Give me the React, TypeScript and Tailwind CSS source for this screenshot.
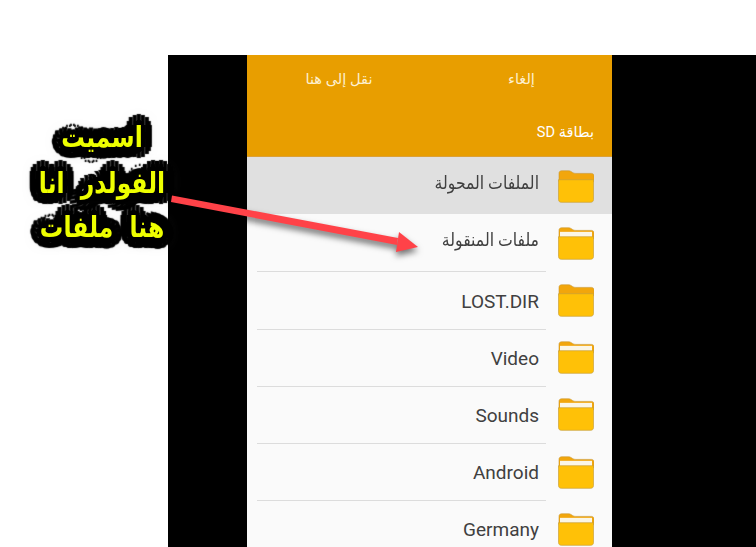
const ROW_FONT = "font-['Roboto','DejaVu_Sans',sans-serif]";

const rows = [
  { name: "الملفات المحولة", open: false, selected: true, arabic: true, noLine: true },
  { name: "ملفات المنقولة", open: true, arabic: true, noLine: true },
  { name: "LOST.DIR", open: false },
  { name: "Video", open: true },
  { name: "Sounds", open: true },
  { name: "Android", open: true },
  { name: "Germany", open: true },
];

const FolderIcon = ({ open }: { open: boolean }) => (
  <svg width="36" height="33" viewBox="0 0 36 34" preserveAspectRatio="none" className="shrink-0">
    <path
      d="M1 3.5C1 1.8 2 .8 3.5 .8H10c2 0 3 .6 4.5 1.7 1 .8 2 1 3.5 1h15.5c1.5 0 2.5 1 2.5 2.5V12H1Z"
      fill="#f2a60c"
      stroke="#c9952e"
      strokeWidth=".6"
    />
    {open && <rect x="2" y="5" width="32" height="5.5" fill="#fbf6e6" />}
    <path
      d="M.5 10H35.5V30.5C35.5 32.2 34.4 33.3 32.7 33.3H3.3C1.6 33.3 .5 32.2 .5 30.5Z"
      fill="#ffc107"
      stroke="#c9a13a"
      strokeWidth=".7"
    />
  </svg>
);

interface RowProps {
  name: string;
  open: boolean;
  selected?: boolean;
  arabic?: boolean;
  noLine?: boolean;
}

const Row = ({ name, open, selected, arabic, noLine }: RowProps) => (
  <div className={`h-[57.2px] flex flex-col ${selected ? "bg-[#e0e0e0]" : "bg-[#fafafa]"}`}>
    <div className={`ml-[10px] w-[289px] h-px shrink-0 ${noLine ? "bg-transparent" : "bg-[#dcdcdc]"}`} />
    <div className="flex-1 flex items-center justify-end pr-[18px] gap-[19px]">
      <span className={`text-[#404040] ${arabic ? "text-[15.7px] pb-[5px] scale-y-[1.15]" : "text-[19px] pt-[3px]"}`}>{name}</span>
      <FolderIcon open={open} />
    </div>
  </div>
);

export default function App() {
  return (
    <div className={`relative w-[756px] h-[547px] overflow-hidden bg-white ${ROW_FONT}`}>
      <div className="pt-[55px] pl-[168px] h-full">
        <div className="h-full bg-black pl-[79px]">
          <div className="w-[365px] h-full bg-[#fafafa] overflow-hidden">
            <div className="h-[102px] bg-[#e89e00] text-white border-b border-[#dba038]">
              <div className="flex pt-[14px] text-[14.6px] text-[#fdf0d0]">
                <div className="w-[184px] text-center">نقل إلى هنا</div>
                <div className="w-[181px] text-center">إلغاء</div>
              </div>
              <div dir="rtl" className="mt-[31px] pr-[18px] text-[14.6px]">بطاقة SD</div>
            </div>
            {rows.map((r) => (
              <Row key={r.name} {...r} />
            ))}
          </div>
        </div>
      </div>

      {/* label */}
      <div
        dir="rtl"
        className="absolute left-[29px] top-[118px] w-[160px] pr-[14px] text-center text-[23.5px] font-bold leading-[35px] [word-spacing:8px] scale-y-[1.25] origin-top text-[#eeff00] font-['DejaVu_Sans',sans-serif] [text-shadow:11px_0_1px_#000,-11px_0_1px_#000,0_9px_1px_#000,0_-9px_1px_#000,8px_6px_1px_#000,-8px_6px_1px_#000,8px_-6px_1px_#000,-8px_-6px_1px_#000,10px_3px_1px_#000,-10px_3px_1px_#000,10px_-3px_1px_#000,-10px_-3px_1px_#000,4px_8px_1px_#000,-4px_8px_1px_#000,4px_-8px_1px_#000,-4px_-8px_1px_#000,5px_0_0_#000,-5px_0_0_#000,0_4px_0_#000,0_-4px_0_#000,3px_3px_0_#000,-3px_3px_0_#000,3px_-3px_0_#000,-3px_-3px_0_#000,0_0_14px_#777]"
      >
        <div className="-mt-[2px] mb-[2px]">اسميت</div>
        <div className="whitespace-nowrap">الفولدر انا</div>
        <div className="whitespace-nowrap">هنا ملفات</div>
      </div>

      {/* arrow */}
      <svg className="absolute inset-0 pointer-events-none drop-shadow-[0_4px_3px_rgba(0,0,0,0.55)]" width="756" height="547">
        <path d="M172 195.5 L398 238 L397 245 L171 202Z" fill="#ff4248" />
        <path d="M399 232 L418 247 L396 252Z" fill="#ff4248" />
      </svg>
    </div>
  );
}
